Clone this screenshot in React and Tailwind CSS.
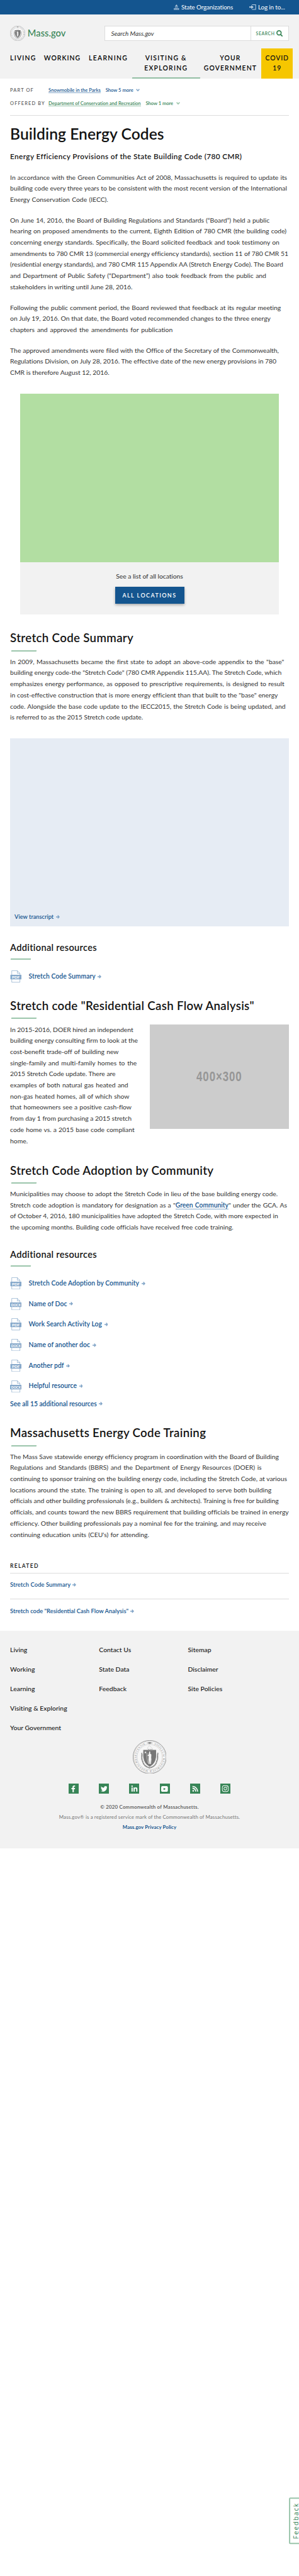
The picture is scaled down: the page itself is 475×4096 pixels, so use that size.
import { FaFacebookF, FaTwitter, FaLinkedinIn, FaRss, FaInstagram } from "react-icons/fa";

function Lines({ items, className = "" }) {
  return (
    <p className={`text-[10.4px] leading-[17.7px] tracking-[-0.03px] text-[#333] ${className}`}>
      {items.map(([width, text], i) => (
        <span key={i} className={`block whitespace-nowrap [text-align-last:justify] ${width}`}>{text}</span>
      ))}
    </p>
  );
}

function Arrow({ className = "" }) {
  return (
    <svg viewBox="0 0 11 11" className={`h-[5.9px] w-[5.9px] shrink-0 text-[#7fa3c6] ${className}`}>
      <path d="M0 5.5H8.5M5 1L9.4 5.5L5 10" fill="none" stroke="currentColor" strokeWidth="2.6" />
    </svg>
  );
}

function Chevron({ className = "" }) {
  return (
    <svg viewBox="0 0 12 9" className={`h-[4.6px] w-[6px] shrink-0 ${className}`}>
      <path d="M1.2 1.4L6 6.6L10.8 1.4" fill="none" stroke="currentColor" strokeWidth="3.2" />
    </svg>
  );
}

function Heading({ children, className = "tracking-[0.3px]" }) {
  return (
    <div>
      <h2 className={`whitespace-nowrap text-[18.7px] font-semibold leading-[24px] ${className}`}>{children}</h2>
      <div className="ml-[1.6px] mt-[7.1px] h-[1.7px] w-[40px] -skew-x-12 bg-[#9bc5ab]" />
    </div>
  );
}

function SubHeading({ children }) {
  return (
    <div>
      <h3 className="whitespace-nowrap text-[14.6px] font-semibold leading-[20px] tracking-[0.3px]">{children}</h3>
      <div className="ml-[1.2px] mt-[6.6px] h-[1.6px] w-[31.6px] -skew-x-12 bg-[#9bc5ab]" />
    </div>
  );
}

function FileIcon({ type }) {
  const doc = type === "DOCX";
  return (
    <svg viewBox="0 0 34 36" className="h-[19.3px] w-[18.2px] shrink-0">
      <path d="M5 .8H21.5L29.2 8.5V35.2H5Z" fill="#fff" stroke="#86a8ca" strokeWidth="1.3" />
      <path d="M21.5 .8V8.5H29.2" fill="none" stroke="#86a8ca" strokeWidth="1.3" />
      <rect x={doc ? 0 : 1} y="13" width={doc ? 34 : 33} height="13.5" fill="#86a8ca" />
      <text x="17.3" y="23.7" textAnchor="middle" textLength={doc ? 28 : 23} lengthAdjust="spacingAndGlyphs" fill="#fff" fontFamily="Lato, sans-serif" fontWeight="900" fontSize="11">{type}</text>
    </svg>
  );
}

function Resource({ type, children }) {
  return (
    <div className="flex h-[20px] items-center">
      <FileIcon type={type} />
      <a className="ml-[11.3px] whitespace-nowrap text-[10.4px] font-semibold tracking-[0.04px] text-[#14558f]">{children}</a>
      <Arrow className="ml-[3.6px]" />
    </div>
  );
}

function Seal({ className = "" }) {
  return (
    <svg viewBox="0 0 100 100" className={`shrink-0 ${className}`}>
      <circle cx="50" cy="50" r="49.3" fill="#f6f6f6" stroke="#777" strokeWidth="1.3" />
      <circle cx="50" cy="50" r="47" fill="none" stroke="#999" strokeWidth=".6" />
      <circle cx="50" cy="50" r="37.3" fill="none" stroke="#888" strokeWidth="1" strokeDasharray="1 .9" />
      <defs>
        <path id="ring" d="M50 10.6A39.4 39.4 0 1 1 49.99 10.6" />
      </defs>
      <text fontFamily="Liberation Serif, serif" fontSize="7.6" fill="#777">
        <textPath href="#ring" startOffset="14" textLength="222">SIGILLUM REIPUBLICÆ MASSACHUSETTENSIS.</textPath>
      </text>
      <path d="M40 8L46 7L48 5.5H52L54 7L60 8L54 9.4L52 10.6H48L46 9.4Z" fill="#888" />
      <path d="M43 27Q45 16 50 16.5L60 27" fill="none" stroke="#c6c6c6" strokeWidth="1" />
      <path d="M45 27H58" stroke="#888" strokeWidth="1.6" strokeDasharray="3 2" />
      <path d="M26 38C29 44 24 54 29 62C32 76 42 80 50 82C58 80 68 76 71 62C76 54 71 44 75 38" fill="none" stroke="#777" strokeWidth="3.6" strokeDasharray="2.6 .7" />
      <path d="M31 29H69V46Q69 68 50 79Q31 68 31 46Z" fill="#777" />
      <path d="M37.5 32.5L38.6 35H41L39.2 36.6L40 39L37.5 37.6L35 39L35.8 36.6L34 35H36.4Z" fill="#f4f4f4" />
      <path d="M49 33L51.5 34V40L55 42.5L54.5 52L55 57L53.8 71H51.5L50.5 59L49.5 71H46.8L46.5 57L47 47L43.5 46L47 42Z" fill="#f4f4f4" />
      <path d="M42.3 38Q40.5 52 44.5 68" fill="none" stroke="#eee" strokeWidth="1" />
    </svg>
  );
}

const intro = [
  [
    ["w-[440px]", "In accordance with the Green Communities Act of 2008, Massachusetts is required to update its"],
    ["w-[439.8px]", "building code every three years to be consistent with the most recent version of the International"],
    ["w-[155.7px]", "Energy Conservation Code (IECC)."],
  ],
  [
    ["w-[412px]", "On June 14, 2016, the Board of Building Regulations and Standards (“Board”) held a public"],
    ["w-[439px]", "hearing on proposed amendments to the current, Eighth Edition of 780 CMR (the building code)"],
    ["w-[427.7px]", "concerning energy standards. Specifically, the Board solicited feedback and took testimony on"],
    ["w-[434.7px]", "amendments to 780 CMR 13 (commercial energy efficiency standards), section 11 of 780 CMR 51"],
    ["w-[432.9px]", "(residential energy standards), and 780 CMR 115 Appendix AA (Stretch Energy Code). The Board"],
    ["w-[406.8px]", "and Department of Public Safety (“Department”) also took feedback from the public and"],
    ["w-[191.7px]", "stakeholders in writing until June 28, 2016."],
  ],
  [
    ["w-[430.1px]", "Following the public comment period, the Board reviewed that feedback at its regular meeting"],
    ["w-[413.8px]", "on July 19, 2016. On that date, the Board voted recommended changes to the three energy"],
    ["w-[258.1px]", "chapters and approved the amendments for publication"],
  ],
  [
    ["w-[426.8px]", "The approved amendments were filed with the Office of the Secretary of the Commonwealth,"],
    ["w-[420.1px]", "Regulations Division, on July 28, 2016. The effective date of the new energy provisions in 780"],
    ["w-[151.5px]", "CMR is therefore August 12, 2016."],
  ],
];

const summary = [
  ["w-[435.3px]", "In 2009, Massachusetts became the first state to adopt an above-code appendix to the \"base\""],
  ["w-[429.2px]", "building energy code-the \"Stretch Code\" (780 CMR Appendix 115.AA). The Stretch Code, which"],
  ["w-[435.6px]", "emphasizes energy performance, as opposed to prescriptive requirements, is designed to result"],
  ["w-[425.3px]", "in cost-effective construction that is more energy efficient than that built to the \"base\" energy"],
  ["w-[437.4px]", "code. Alongside the base code update to the IECC2015, the Stretch Code is being updated, and"],
  ["w-[211.1px]", "is referred to as the 2015 Stretch code update."],
];

const cashFlow = [
  ["w-[194.8px]", "In 2015-2016, DOER hired an independent"],
  ["w-[202.9px]", "building energy consulting firm to look at the"],
  ["w-[172.4px]", "cost-benefit trade-off of building new"],
  ["w-[201.1px]", "single-family and multi-family homes to the"],
  ["w-[167.2px]", "2015 Stretch Code update. There are"],
  ["w-[187.5px]", "examples of both natural gas heated and"],
  ["w-[189.3px]", "non-gas heated homes, all of which show"],
  ["w-[192.9px]", "that homeowners see a positive cash-flow"],
  ["w-[191.1px]", "from day 1 from purchasing a 2015 stretch"],
  ["w-[197.5px]", "code home vs. a 2015 base code compliant"],
  ["w-[28.8px]", "home."],
];

const adoption = [
  ["w-[425px]", "Municipalities may choose to adopt the Stretch Code in lieu of the base building energy code."],
  ["w-[439.8px]", <>Stretch code adoption is mandatory for designation as a "<a className="border-b border-[#86a8ca] font-semibold text-[#14558f]">Green Community</a>" under the GCA. As</>],
  ["w-[425.6px]", "of October 4, 2016, 180 municipalities have adopted the Stretch Code, with more expected in"],
  ["w-[354.7px]", "the upcoming months. Building code officials have received free code training."],
];

const training = [
  ["w-[426.8px]", "The Mass Save statewide energy efficiency program in coordination with the Board of Building"],
  ["w-[399.5px]", "Regulations and Standards (BBRS) and the Department of Energy Resources (DOER) is"],
  ["w-[439.8px]", "continuing to sponsor training on the building energy code, including the Stretch Code, at various"],
  ["w-[415px]", "locations around the state. The training is open to all, and developed to serve both building"],
  ["w-[426.2px]", "officials and other building professionals (e.g., builders & architects). Training is free for building"],
  ["w-[442.5px]", "officials, and counts toward the new BBRS requirement that building officials be trained in energy"],
  ["w-[406.8px]", "efficiency. Other building professionals pay a nominal fee for the training, and may receive"],
  ["w-[220.8px]", "continuing education units (CEU's) for attending."],
];

const footerLinks = [
  ["Living", "Working", "Learning", "Visiting & Exploring", "Your Government"],
  ["Contact Us", "State Data", "Feedback"],
  ["Sitemap", "Disclaimer", "Site Policies"],
];

function YoutubeIcon({ className }) {
  return (
    <svg viewBox="0 0 20 17" className={className}>
      <rect width="20" height="17" rx="4" fill="#fff" />
      <path d="M7.3 5V12L13.6 8.5Z" fill="#388557" />
    </svg>
  );
}

function Header() {
  return (
    <header>
      <div className="flex h-[23px] items-center justify-end bg-[#14558f] pr-[22.4px] text-[9.9px] leading-[23px] text-white">
        <svg viewBox="0 0 16 16" className="mr-[3px] h-[8.6px] w-[8.6px]" fill="#b7cce0">
          <path d="M7.5 0H8.5V1.5Q11 2.3 11.5 5H4.5Q5 2.3 7.5 1.5ZM3.5 6H12.5V7.2H3.5ZM4 8H5.6V10.5H4ZM7.2 8H8.8V10.5H7.2ZM10.4 8H12V10.5H10.4ZM0 11H16V12H0ZM0.6 12.5H3V15H.6ZM4 12.5H6V15H4ZM7 12.5H9V15H7ZM10 12.5H12V15H10ZM13 12.5H15.4V15H13ZM0 15H16V16H0Z" />
        </svg>
        <span className="w-[83px] whitespace-nowrap tracking-[-0.13px]">State Organizations</span>
        <svg viewBox="0 0 20 16" className="ml-[25.3px] mr-[3px] h-[8.6px] w-[10.7px]" fill="#b7cce0">
          <path d="M0 6H6V2.5L13 8L6 13.5V10H0ZM8 0H20V16H8V14H18V2H8Z" />
        </svg>
        <span className="w-[42.6px] whitespace-nowrap tracking-[-0.15px]">Log in to...</span>
      </div>
      <div className="h-[102px] bg-[#f2f2f2] pt-[17.8px]">
        <div className="flex h-[24.6px] items-center pl-[16.1px] pr-[16.1px]">
          <Seal className="h-[24.1px] w-[24.1px]" />
          <span className="ml-[3.6px] w-[122.3px] text-[14.6px] font-medium tracking-[0.08px] text-[#388557]">Mass.gov</span>
          <div className="flex h-[24.6px] w-[292.7px] border border-[#dcdcdc] bg-white">
            <span className="flex-1 pl-[9.5px] text-[9.9px] italic leading-[22.6px] text-[#333]">Search Mass.gov</span>
            <span className="flex w-[60px] items-center border-l border-[#dcdcdc] pl-[7.8px] text-[6.8px] font-semibold tracking-[0.62px] text-[#388557]">
              SEARCH
              <svg viewBox="0 0 20 20" className="ml-[2.2px] h-[10.7px] w-[10.7px] shrink-0">
                <circle cx="8" cy="8" r="6.3" fill="none" stroke="currentColor" strokeWidth="3.2" />
                <path d="M12.4 12.4L18.6 18.6" stroke="currentColor" strokeWidth="3.6" />
              </svg>
            </span>
          </div>
        </div>
        <nav className="mt-[11.3px] flex h-[48.3px] pl-[16.1px] text-[10.4px] font-semibold leading-[16.6px] tracking-[1.25px] text-black *:pt-[7.2px]">
          <span className="w-[53.6px]">LIVING</span>
          <span className="w-[71.3px] tracking-[1.02px]">WORKING</span>
          <span className="w-[68.6px] tracking-[1.32px]">LEARNING</span>
          <span className="flex w-[108.3px] flex-col items-center justify-between">
            <span className="text-center">VISITING &amp;<br />EXPLORING</span>
            <span className="h-[1.7px] w-full -skew-x-12 bg-[#92bda3]" />
          </span>
          <span className="w-[97.1px] pr-[1px] text-center tracking-[1.1px]">YOUR<br />GOVERNMENT</span>
          <span className="w-[50.4px] bg-[#f6c600] text-center tracking-[0.85px] text-[#141414]">COVID<br />19</span>
        </nav>
      </div>
    </header>
  );
}

function Relation({ label, className, linkClass, link, more, gray }) {
  return (
    <div className={`flex h-[20.9px] items-center whitespace-nowrap text-[7.6px] font-semibold ${className}`}>
      <span className="w-[61px] text-[7.4px] font-medium tracking-[1.15px] text-[#535353]">{label}</span>
      <a className={`border-b leading-[8.4px] ${linkClass}`}>{link}</a>
      <span className="ml-[8px]">{more}</span>
      <Chevron className={`ml-[4.6px] ${gray}`} />
    </div>
  );
}

export default function App() {
  return (
    <div className="relative h-[4096px] w-[475px] overflow-hidden bg-white font-[Lato,sans-serif] text-[#141414]">
      <Header />
      <main className="px-[16.1px]">
        <section className="h-[501px] pt-[8.3px]">
          <Relation label="PART OF" link="Snowmobile in the Parks" more="Show 5 more" className="text-[#14558f]" linkClass="border-[#86a8ca]" gray="text-[#86a8ca]" />
          <Relation label="OFFERED BY" link="Department of Conservation and Recreation" more="Show 1 more" className="tracking-[-0.04px] text-[#388557]" linkClass="border-[#9bc5ab]" gray="text-[#9bc5ab]" />
          <div className="mt-[7.5px] h-px bg-[#dcdcdc]" />
          <h1 className="mt-[14.9px] whitespace-nowrap text-[24.6px] font-semibold leading-[30px] tracking-[0.07px]">Building Energy Codes</h1>
          <p className="mt-[10.4px] whitespace-nowrap text-[11.8px] font-semibold leading-[20px] tracking-[0.37px]">Energy Efficiency Provisions of the State Building Code (780 CMR)</p>
          <div className="mt-[14.7px] flex flex-col gap-[15px]">
            {intro.map((items, i) => <Lines key={i} items={items} />)}
          </div>
        </section>

        <section className="mx-[16.1px] h-[351.4px] bg-[#f2f2f2]">
          <div className="h-[268.2px] bg-[#b2dea2]" />
          <div className="flex flex-col items-center pt-[12.9px]">
            <span className="text-[10.4px] leading-[18px] tracking-[-0.07px] text-[#333]">See a list of all locations</span>
            <a className="mt-[8.4px] flex h-[26.8px] w-[110px] items-center justify-center bg-[#14558f] text-[9px] font-semibold tracking-[1.42px] text-white shadow-[0_2px_4px_rgba(0,0,0,0.3)]">ALL LOCATIONS</a>
          </div>
        </section>

        <section className="h-[197px] pt-[25.1px]">
          <Heading className="tracking-[0.33px]">Stretch Code Summary</Heading>
          <Lines items={summary} className="mt-[8.5px]" />
        </section>

        <section className="flex h-[298.8px] items-end bg-[#e6ecf4] pb-[7px] pl-[7px]">
          <a className="flex items-center text-[9.2px] font-semibold leading-[16px] tracking-[0.02px] text-[#14558f]">View transcript<Arrow className="ml-[3.4px]" /></a>
        </section>

        <section className="h-[114.1px] pt-[24.3px]">
          <SubHeading>Additional resources</SubHeading>
          <div className="mt-[17.4px]"><Resource type="PDF">Stretch Code Summary</Resource></div>
        </section>

        <section className="h-[261.8px]">
          <Heading>Stretch code "Residential Cash Flow Analysis"</Heading>
          <div className="mt-[8.5px] flex items-start justify-between">
            <Lines items={cashFlow} />
            <div className="flex h-[166.1px] w-[221.4px] items-center justify-center bg-[#ccc] text-[22.5px] font-bold text-[#969696]">
              <span className="scale-x-75 font-['Liberation_Sans'] tracking-[1.2px]">400×300</span>
            </div>
          </div>
        </section>

        <section className="h-[136.1px]">
          <Heading>Stretch Code Adoption by Community</Heading>
          <Lines items={adoption} className="mt-[8px]" />
        </section>

        <section className="h-[281.3px]">
          <SubHeading>Additional resources</SubHeading>
          <div className="mt-[17.3px] flex flex-col gap-[12.71px]">
            <Resource type="PDF">Stretch Code Adoption by Community</Resource>
            <Resource type="DOCX">Name of Doc</Resource>
            <Resource type="PDF">Work Search Activity Log</Resource>
            <Resource type="DOCX">Name of another doc</Resource>
            <Resource type="PDF">Another pdf</Resource>
            <Resource type="DOCX">Helpful resource</Resource>
          </div>
          <a className="mt-[10.2px] flex items-center text-[10.4px] font-semibold leading-[16px] tracking-[-0.04px] text-[#14558f]">See all 15 additional resources<Arrow className="ml-[3.4px]" /></a>
        </section>

        <section className="h-[216.1px]">
          <Heading>Massachusetts Energy Code Training</Heading>
          <Lines items={training} className="mt-[8.4px]" />
        </section>

        <section className="h-[110.3px]">
          <h4 className="text-[8.6px] font-semibold leading-[14px] tracking-[1.28px]">RELATED</h4>
          <div className="mt-[4px] h-px bg-[#dcdcdc]" />
          <a className="flex h-[40.2px] items-center pb-[3px] text-[9.4px] font-semibold tracking-[0.05px] text-[#14558f]">Stretch Code Summary<Arrow className="ml-[3.2px]" /></a>
          <div className="h-px bg-[#dcdcdc]" />
          <a className="flex h-[39px] items-center text-[9.4px] font-semibold text-[#14558f]">Stretch code "Residential Cash Flow Analysis"<Arrow className="ml-[3.2px]" /></a>
        </section>
      </main>

      <footer className="h-[346.5px] bg-[#f2f2f2] pt-[14.9px]">
        <div className="flex h-[158.9px] pl-[16.1px] text-[10.4px] font-medium leading-[30.95px] tracking-[0.03px]">
          {footerLinks.map((col) => (
            <ul key={col[0]} className="w-[141.2px]">
              {col.map((name) => <li key={name}>{name}</li>)}
            </ul>
          ))}
        </div>
        <Seal className="mx-auto h-[53.6px] w-[53.6px]" />
        <div className="mx-auto mt-[16px] flex h-[16.1px] w-[257.4px] justify-between text-white *:flex *:w-[16.1px] *:items-center *:justify-center *:bg-[#388557]">
          <span><FaFacebookF className="h-[10.8px] w-[10.8px]" /></span>
          <span><FaTwitter className="h-[10.8px] w-[10.8px]" /></span>
          <span><FaLinkedinIn className="h-[11px] w-[11px]" /></span>
          <span><YoutubeIcon className="h-[9.1px] w-[10.7px]" /></span>
          <span><FaRss className="h-[10.4px] w-[10.4px]" /></span>
          <span><FaInstagram className="h-[12px] w-[12px]" /></span>
        </div>
        <div className="mt-[12.2px] text-center text-[7.9px] leading-[16.4px]">
          <p className="font-semibold tracking-[0.22px] text-[#535353]">© 2020 Commonwealth of Massachusetts.</p>
          <p className="tracking-[0.13px] text-[#777]">Mass.gov® is a registered service mark of the Commonwealth of Massachusetts.</p>
          <p className="font-bold tracking-[0.1px] text-[#14558f]">Mass.gov Privacy Policy</p>
        </div>
      </footer>

      <div className="absolute right-[-2px] top-[3970.5px] flex h-[74.2px] w-[18.1px] rotate-180 items-center justify-center rounded-r-[2px] border-2 border-[#9bc5ab] pr-[4.5px] font-['Open_Sans'] text-[10.4px] tracking-[1.5px] text-[#388557] [writing-mode:vertical-rl]">Feedback</div>
    </div>
  );
}
